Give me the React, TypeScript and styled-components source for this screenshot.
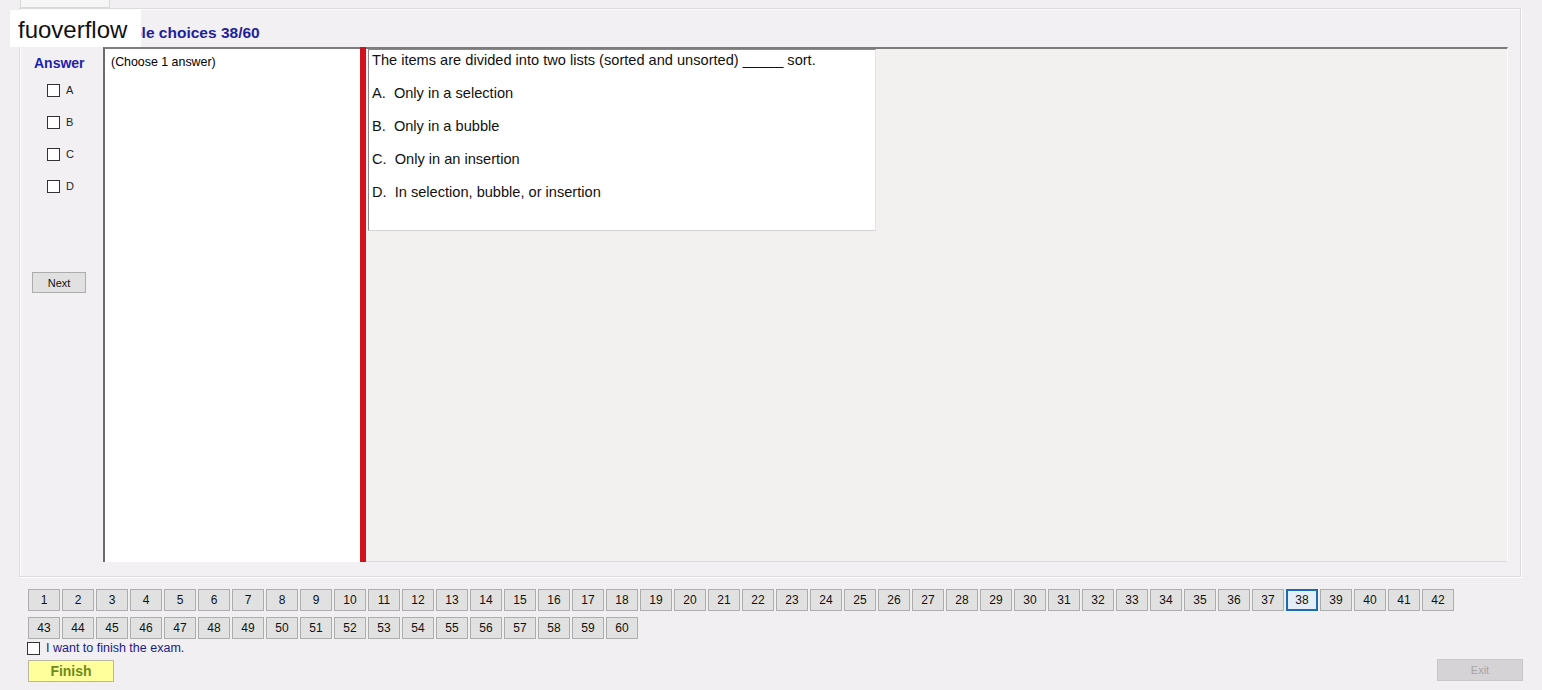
import React, { useState } from 'react';
import styled, { createGlobalStyle } from 'styled-components';

const GlobalStyle = createGlobalStyle`
  body {
    margin: 0;
    background: #f1eff1;
    font-family: "Liberation Sans", Arial, sans-serif;
    color: #000;
  }
`

const Page = styled.div`
  position: relative;
  width: 1542px;
  height: 690px;
  overflow: hidden;
`

const TabStrip = styled.div`
  height: 8px;
  padding-left: 20px;
`

const Tab = styled.div`
  width: 90px;
  height: 8px;
  box-sizing: border-box;
  border: 1px solid #d9d9d9;
  border-top: none;
  background: #f7f6f7;
`

const Panel = styled.div`
  margin-left: 19px;
  width: 1502px;
  height: 569px;
  box-sizing: border-box;
  border: 1px solid #dcdadc;
  box-shadow: inset 1px 1px 0 #fff, 1px 1px 0 #fff;
  background: #f2f0f2;
  padding-left: 8px;
`

const TitleRow = styled.div`
  height: 38px;
  display: flex;
  align-items: flex-end;
  padding-left: 68px;
  box-sizing: border-box;
  padding-bottom: 5px;
`

const Title = styled.span`
  font-weight: bold;
  font-size: 15.5px;
  color: #1f1f9c;
`

const Group = styled.div`
  display: flex;
  width: 1480px;
  height: 515px;
`

const AnswerCol = styled.div`
  width: 75px;
  display: flex;
  flex-direction: column;
  padding-top: 8px;
  box-sizing: border-box;
`

const AnswerHead = styled.div`
  font-weight: bold;
  font-size: 14px;
  color: #1f1fb0;
  padding-left: 6px;
  margin-bottom: 13px;
`

const OptionRow = styled.label`
  display: flex;
  gap: 6px;
  padding-left: 19px;
  height: 32px;
  align-items: flex-start;
  font-size: 11px;
  color: #222;
`

const Box = styled.span`
  display: inline-block;
  width: 13px;
  height: 13px;
  box-sizing: border-box;
  border: 1px solid #333;
  background: #fff;
  font-size: 11px;
  line-height: 11px;
  text-align: center;
`

const NextButton = styled.button`
  margin: 60px 0 0 4px;
  width: 54px;
  height: 21px;
  border: 1px solid #adadad;
  background: #e1e1e1;
  font-family: inherit;
  font-size: 11px;
  padding: 0;
  color: #111;
`

const AnswerText = styled.div`
  width: 257px;
  box-sizing: border-box;
  background: #fff;
  border-top: 2px solid #7d7d7d;
  border-left: 2px solid #6a6a6a;
  padding: 6px 0 0 6px;
  font-size: 12.4px;
`

const RedBar = styled.div`
  width: 6px;
  background: #d0121c;
`

const QuestionArea = styled.div`
  flex: 1;
  border-top: 2px solid #7b7b7b;
  border-bottom: 1px solid #dedcde;
  border-right: 1px solid #fff;
  background: #f3f0f0;
  padding-left: 2px;
`

const QuestionBox = styled.div`
  width: 508px;
  height: 182px;
  box-sizing: border-box;
  background: #fff;
  border-left: 1px solid #8a8a8a;
  border-top: 1px solid #8a8a8a;
  border-right: 1px solid #e4e2e4;
  border-bottom: 1px solid #d4d2d4;
  padding: 1px 0 0 3px;
  font-size: 14.6px;
  color: #111;
`

const QLine = styled.div`
  height: 33px;
  line-height: 18px;
  white-space: pre;
`

const NumGrid = styled.div`
  display: flex;
  flex-wrap: wrap;
  gap: 6px 2px;
  width: 1430px;
  margin: 12px 0 0 28px;
`

const NumButton = styled.button<{ active?: boolean }>`
  width: 32px;
  height: 22px;
  box-sizing: border-box;
  padding: 0;
  border: ${p => (p.active ? '2px solid #1c6bb0' : '1px solid #adadad')};
  background: ${p => (p.active ? '#e3eef8' : '#e1e1e1')};
  font-family: inherit;
  font-size: 12px;
  color: #111;
`

const BottomBar = styled.div`
  display: flex;
  justify-content: space-between;
  align-items: flex-end;
  padding: 0 19px 0 27px;
`

const FinishCol = styled.div`
  display: flex;
  flex-direction: column;
`

const FinishCheck = styled.label`
  display: flex;
  align-items: center;
  gap: 6px;
  height: 18px;
  font-size: 12.5px;
  color: #1a1a8a;
`

const FinishButton = styled.button`
  margin: 3px 0 0 1px;
  width: 86px;
  height: 22px;
  border: 1px solid #b9b9a0;
  background: #ffff9c;
  font-family: inherit;
  font-weight: bold;
  font-size: 14px;
  color: #6f8a18;
  padding: 0;
`

const ExitButton = styled.button`
  width: 86px;
  height: 22px;
  margin-bottom: 1px;
  border: 1px solid #c8c6c8;
  background: #d6d3d6;
  font-family: inherit;
  font-size: 11px;
  color: #a8a6a8;
  padding: 0;
`

const Watermark = styled.div`
  position: absolute;
  left: 10px;
  top: 10px;
  width: 131px;
  height: 37px;
  background: #fff;
  font-family: "Liberation Sans", Arial, sans-serif;
  font-size: 24px;
  color: #111;
  padding: 8px 0 0 8px;
  box-sizing: border-box;
  line-height: 24px;
`

const options = [
  'A.  Only in a selection',
  'B.  Only in a bubble',
  'C.  Only in an insertion',
  'D.  In selection, bubble, or insertion',
]

export default function App() {
  const [picked, setPicked] = useState<string[]>([])
  const [finish, setFinish] = useState(false)

  const toggle = (l: string) =>
    setPicked(p => (p.includes(l) ? p.filter(x => x !== l) : [...p, l]))

  return (
    <Page>
      <GlobalStyle />
      <TabStrip>
        <Tab />
      </TabStrip>
      <Panel>
        <TitleRow>
          <Title>Multiple choices 38/60</Title>
        </TitleRow>
        <Group>
          <AnswerCol>
            <AnswerHead>Answer</AnswerHead>
            {['A', 'B', 'C', 'D'].map(l => (
              <OptionRow key={l} onClick={() => toggle(l)}>
                <Box>{picked.includes(l) ? '✓' : ''}</Box>
                {l}
              </OptionRow>
            ))}
            <NextButton>Next</NextButton>
          </AnswerCol>
          <AnswerText>(Choose 1 answer)</AnswerText>
          <RedBar />
          <QuestionArea>
            <QuestionBox>
              <QLine>The items are divided into two lists (sorted and unsorted) _____ sort.</QLine>
              {options.map(o => (
                <QLine key={o}>{o}</QLine>
              ))}
            </QuestionBox>
          </QuestionArea>
        </Group>
      </Panel>
      <NumGrid>
        {Array.from({ length: 60 }, (_, i) => i + 1).map(n => (
          <NumButton key={n} active={n === 38}>{n}</NumButton>
        ))}
      </NumGrid>
      <BottomBar>
        <FinishCol>
          <FinishCheck onClick={() => setFinish(!finish)}>
            <Box>{finish ? '✓' : ''}</Box>
            I want to finish the exam.
          </FinishCheck>
          <FinishButton>Finish</FinishButton>
        </FinishCol>
        <ExitButton disabled>Exit</ExitButton>
      </BottomBar>
      <Watermark>fuoverflow</Watermark>
    </Page>
  )
}
